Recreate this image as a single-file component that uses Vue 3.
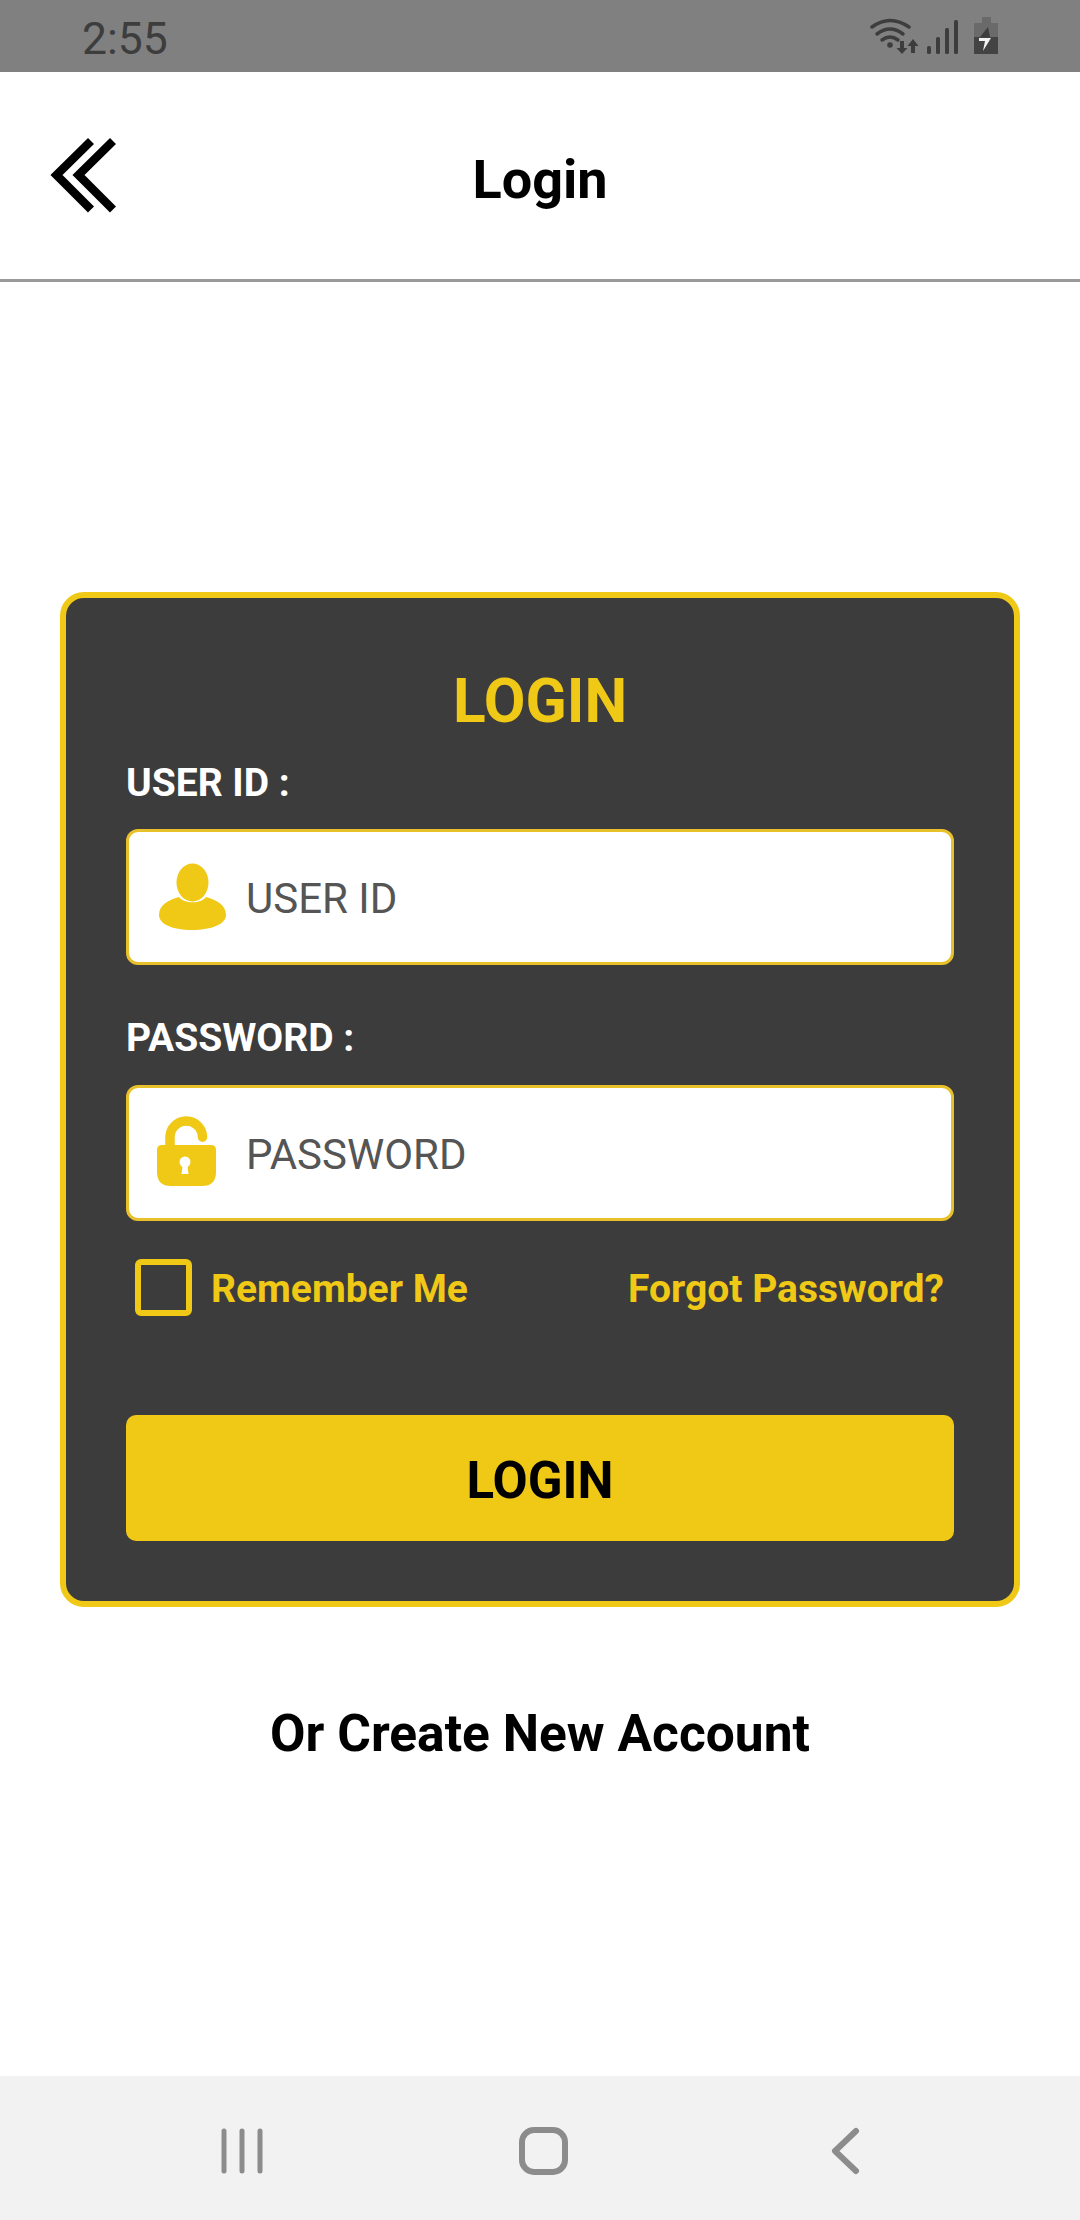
<script setup>
const fields = [
  { label: 'USER ID :', placeholder: 'USER ID', kind: 'user' },
  { label: 'PASSWORD :', placeholder: 'PASSWORD', kind: 'lock' },
]
</script>

<template>
  <div class="page">
    <div class="status">
      <span class="time">2:55</span>
      <svg class="status-icons" width="140" height="50" viewBox="870 12 140 50">
        <g fill="none" stroke="#3d3d3d" stroke-linecap="round">
          <path d="M872 28 Q890 15 909 28" stroke-width="3.5" />
          <path d="M877 35 Q890 25 903 35" stroke-width="3.5" />
          <path d="M882 41 Q890 35 898 41" stroke-width="3.5" />
        </g>
        <circle cx="890" cy="46" r="2.8" fill="#3d3d3d" />
        <path d="M900 42h4v7h3.5l-5.5 6l-5.5-6h3.5z M911 47v7h4v-7h3.500l-5.500-7l-5.500 7z" fill="#3d3d3d" />
        <g fill="#3d3d3d">
          <rect x="927" y="47" width="4" height="8" rx="1.500" />
          <rect x="936" y="38" width="4" height="17" rx="1.500" />
          <rect x="945" y="29" width="4" height="26" rx="1.500" />
          <rect x="954" y="21" width="4" height="34" rx="1.500" />
        </g>
        <path d="M982 18h9v6h7v14h-24v-14h8z" fill="#6a6a6a" />
        <rect x="974" y="38" width="24" height="17" fill="#434343" />
        <path d="M988 28l-8 10h10z" fill="#3d3d3d" />
        <path d="M979 39h12l-8 13l2-10h-6z" fill="#f2f2f2" />
      </svg>
    </div>

    <header class="topbar">
      <svg class="back" width="70" height="80" viewBox="46 136 70 80">
        <path d="M91 141L56.500 175L91 209.500M113 141L78.500 175L113 209.500" fill="none" stroke="#000" stroke-width="8.500" />
      </svg>
      <h1 class="title">Login</h1>
    </header>

    <main class="content">
      <section class="card">
        <h2 class="card-title">LOGIN</h2>
        <template v-for="(f, i) in fields" :key="f.kind">
          <div class="label" :class="{ second: i === 1 }">{{ f.label }}</div>
          <div class="field">
            <svg v-if="f.kind === 'user'" class="icon-user" width="70" height="68" viewBox="0 0 70 68">
              <ellipse cx="35.500" cy="19.500" rx="16" ry="19" fill="#f0c816" />
              <path d="M22 34C27 41 44 41 49 34C60 37 69 42 69 52C69 62 52 67 35 67C18 67 2 62 2 52C2 42 11 37 22 34z" fill="#f0c816" />
            </svg>
            <svg v-else class="icon-lock" width="60" height="72" viewBox="0 0 60 72">
              <path d="M13 31V21.250A16.250 16.250 0 0 1 45.500 21.250" fill="none" stroke="#f0c816" stroke-width="9.500" stroke-linecap="round" />
              <path d="M5 29H54Q59 29 59 34V56Q59 70 45 70H14Q0 70 0 56V34Q0 29 5 29z" fill="#f0c816" />
              <circle cx="28" cy="46" r="5.500" fill="#fff" />
              <path d="M26 47h4l1.500 11h-7z" fill="#fff" />
            </svg>
            <span class="placeholder">{{ f.placeholder }}</span>
          </div>
        </template>

        <div class="options">
          <div class="remember">
            <span class="checkbox"></span>
            <span class="opt-text">Remember Me</span>
          </div>
          <span class="opt-text">Forgot Password?</span>
        </div>

        <div class="submit">LOGIN</div>
      </section>

      <p class="create">Or Create New Account</p>
    </main>

    <nav class="navbar">
      <svg width="44" height="46" viewBox="221 2128 44 46" class="nav-recent">
        <path d="M224 2131V2171M242 2131V2171M260 2131V2171" stroke="#8c8c8c" stroke-width="5" stroke-linecap="round" fill="none" />
      </svg>
      <span class="nav-home"></span>
      <svg width="30" height="48" viewBox="830 2127 30 48" class="nav-back">
        <path d="M856 2131L835 2151L856 2171" stroke="#8c8c8c" stroke-width="6" stroke-linecap="round" stroke-linejoin="round" fill="none" />
      </svg>
    </nav>
  </div>
</template>

<style>
body { margin: 0; background: #fff; }
</style>

<style scoped>
.page {
  width: 1080px;
  height: 2220px;
  display: flex;
  flex-direction: column;
  background: #fff;
  font-family: Roboto, "Liberation Sans", sans-serif;
  overflow: hidden;
}
.status {
  height: 72px;
  background: #808080;
  display: flex;
  align-items: center;
  justify-content: space-between;
  padding: 0 70px 0 82px;
  box-sizing: border-box;
  flex: none;
}
.time {
  font-size: 44.5px;
  line-height: 72px;
  margin-top: 5px;
  color: #3d3d3d;
  font-weight: 400;
}
.status-icons { display: block; }
.topbar {
  height: 210px;
  flex: none;
  box-sizing: border-box;
  border-bottom: 3px solid #999;
  padding-top: 8px;
  display: flex;
  align-items: center;
  justify-content: center;
  position: relative;
}
.back {
  position: absolute;
  left: 46px;
  top: 64px;
}
.title {
  margin: 0;
  font-size: 54px;
  line-height: 60px;
  font-weight: 700;
  color: #000;
}
.content { flex: 1; min-height: 0; }
.card {
  box-sizing: border-box;
  width: 960px;
  margin: 310px auto 0;
  padding: 68px 60px 60px;
  background: #3c3c3c;
  border: 6px solid #f0c816;
  border-radius: 24px;
}
.card-title {
  margin: 0;
  font-size: 60.500px;
  line-height: 72px;
  font-weight: 700;
  color: #f0c816;
  text-align: center;
}
.label {
  margin: 21px 0 22px;
  font-size: 39px;
  line-height: 48px;
  font-weight: 700;
  color: #fff;
}
.label.second { margin: 49px 0 23px; }
.field {
  box-sizing: border-box;
  height: 136px;
  display: flex;
  align-items: center;
  background: #fff;
  border: 3px solid #e8c02a;
  border-radius: 12px;
  padding-left: 30px;
}
.icon-user { flex: none; margin-left: -2px; margin-right: 19px; }
.icon-lock { flex: none; margin-left: -2px; margin-right: 29px; margin-top: -2px; }
.placeholder {
  font-size: 42px;
  line-height: 48px;
  padding-top: 4px;
  color: #555;
  font-weight: 400;
}
.options {
  margin-top: 38px;
  padding: 0 10px 0 9px;
  display: flex;
  align-items: center;
  justify-content: space-between;
}
.remember { display: flex; align-items: center; gap: 19px; }
.checkbox {
  box-sizing: border-box;
  width: 57px;
  height: 57px;
  border: 6px solid #f0c816;
  border-radius: 6px;
  display: block;
}
.opt-text {
  font-size: 39px;
  line-height: 48px;
  padding-top: 3px;
  font-weight: 700;
  color: #f0c816;
}
.submit {
  margin-top: 99px;
  height: 126px;
  box-sizing: border-box;
  padding-top: 4px;
  border-radius: 10px;
  background: #f0c816;
  color: #000;
  font-size: 51px;
  font-weight: 700;
  display: flex;
  align-items: center;
  justify-content: center;
}
.create {
  margin: 97px 0 0;
  text-align: center;
  font-size: 51.500px;
  line-height: 60px;
  font-weight: 700;
  color: #000;
}
.navbar {
  height: 144px;
  flex: none;
  background: #f2f2f2;
  position: relative;
}
.nav-recent { position: absolute; left: 221px; top: 52px; }
.nav-home {
  position: absolute;
  left: 519px;
  top: 51px;
  width: 49px;
  height: 48px;
  box-sizing: border-box;
  border: 6px solid #8c8c8c;
  border-radius: 15px;
}
.nav-back { position: absolute; left: 830px; top: 51px; }
</style>
